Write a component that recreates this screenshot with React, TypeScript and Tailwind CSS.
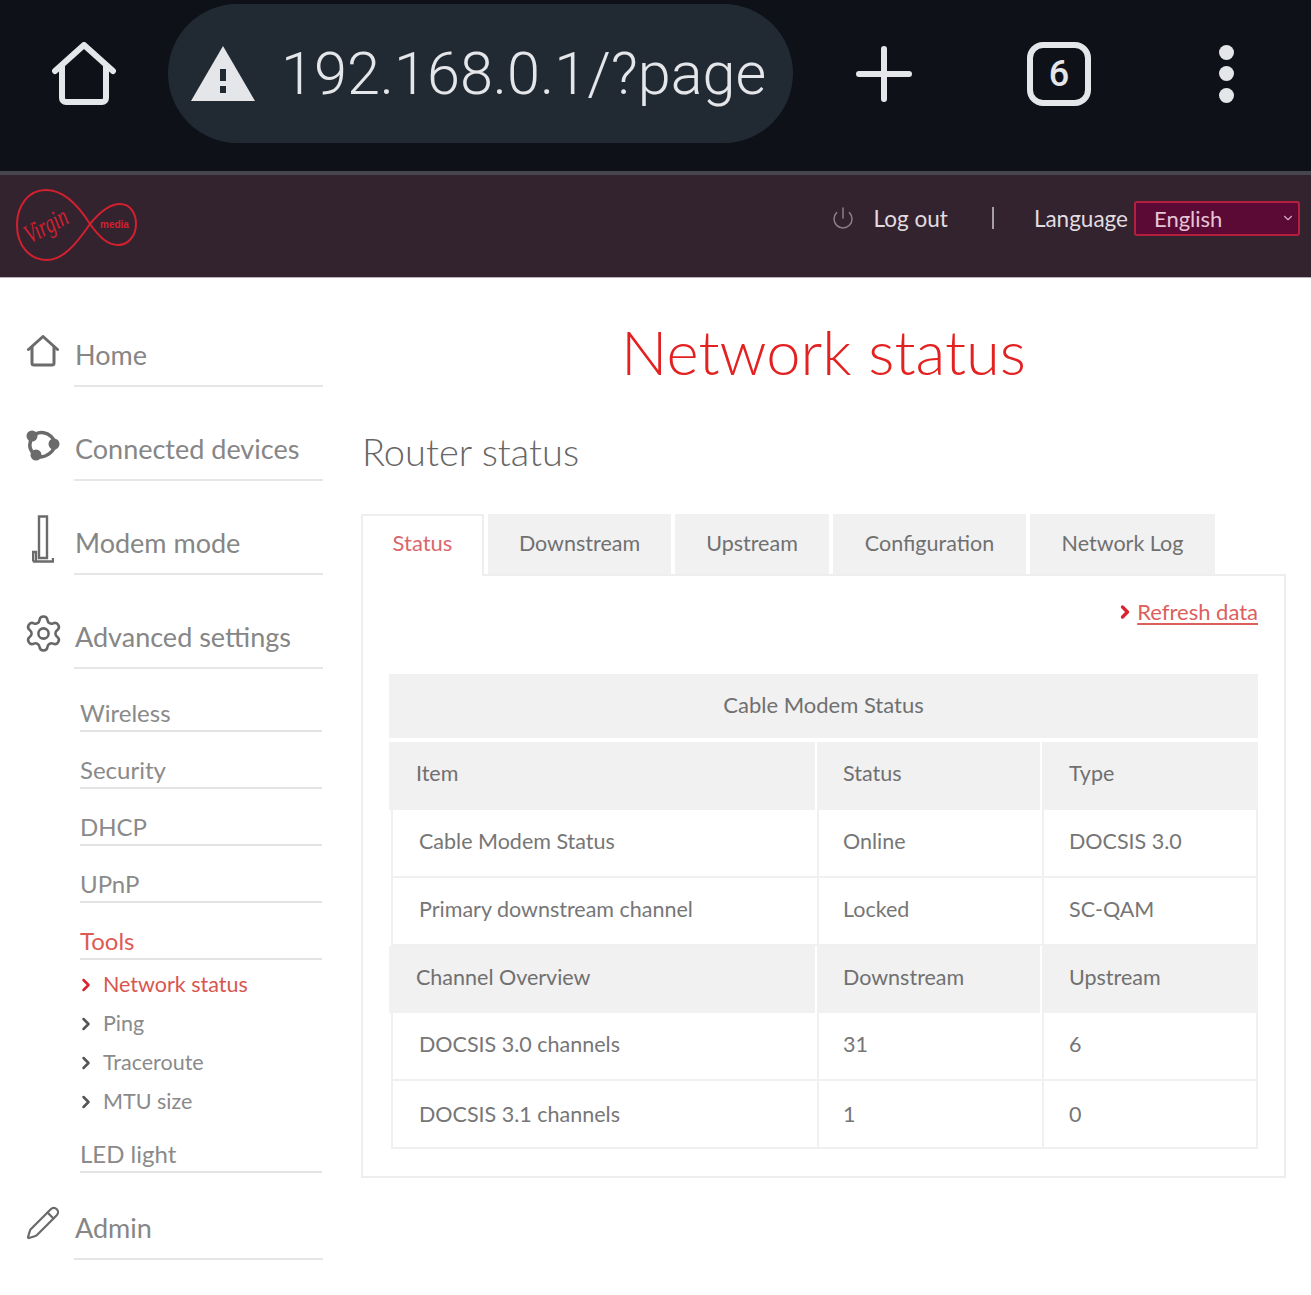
import { ChevronDown, ChevronRight, Pencil, Power, Settings } from 'lucide-react';
import { clsx } from 'clsx';
import type { ReactNode } from 'react';

const font = "font-['Lato','Liberation_Sans',sans-serif]";

function HomeIcon({ className }: { className?: string }) {
  return (
    <svg viewBox="0 0 64 64" className={className} fill="none" stroke="currentColor" strokeWidth="6" strokeLinejoin="round" strokeLinecap="round">
      <path d="M3 29 L32 3 L61 29" />
      <path d="M10 24 V56 a4 4 0 0 0 4 4 H50 a4 4 0 0 0 4 -4 V24" />
    </svg>
  );
}

function DevicesIcon() {
  return (
    <svg viewBox="0 0 34 34" className="h-[34px] w-[34px] text-[#6b6b6b]">
      <path d="M6 10 C 11 2, 24 2, 30 16 C 26 28, 14 32, 8 26 C 3 21, 3 15, 6 10 Z" fill="none" stroke="currentColor" strokeWidth="3.5" />
      <circle cx="6" cy="8" r="5.5" fill="currentColor" />
      <circle cx="28" cy="16" r="5.5" fill="currentColor" />
      <circle cx="10" cy="27" r="5.5" fill="currentColor" />
    </svg>
  );
}

function ModemIcon() {
  return (
    <svg viewBox="0 0 22 48" className="h-[48px] w-[22px] text-[#6b6b6b]" fill="none" stroke="currentColor">
      <path d="M7 1.5 H15 V43 H7 Z" strokeWidth="2.4" />
      <path d="M1 46.5 V37 H4 V46.5 M1 46.5 H21 V43" strokeWidth="2.4" />
    </svg>
  );
}

function NavRow({ icon, label, short }: { icon: ReactNode; label: string; short?: boolean }) {
  return (
    <div className={clsx('flex items-start', short ? 'h-[87px]' : 'h-[94px]')}>
      <div className={clsx('flex h-full w-[75px] shrink-0 items-center justify-center pl-[11px]', short ? 'pt-[13px]' : 'pt-[22px]')}>{icon}</div>
      <div className="-ml-[1px] flex h-full flex-1 items-end border-b-2 border-[#e6e6e6] pb-[10px] pl-[1px] text-[27px] leading-[40px] text-[#868686]">{label}</div>
    </div>
  );
}

function SubRow({ label, active }: { label: string; active?: boolean }) {
  return (
    <div className={clsx('flex h-[57px] items-end border-b-2 border-[#e3e3e3] pb-[1px] text-[24px] leading-[32px]', active ? 'text-[#dd5a55]' : 'text-[#8a8a8a]')}>
      {label}
    </div>
  );
}

function ToolRow({ label, active }: { label: string; active?: boolean }) {
  return (
    <div className={clsx('-ml-[4px] flex h-[39px] items-center gap-[7px] text-[21.5px]', active ? 'text-[#d8564f]' : 'text-[#8a8a8a]')}>
      <ChevronRight size={20} strokeWidth={3} className={active ? 'text-[#d9232e]' : 'text-[#555555]'} />
      {label}
    </div>
  );
}

function Sidebar() {
  return (
    <aside className="w-[323px] shrink-0 pt-[16px]">
      <NavRow icon={<HomeIcon className="h-[32px] w-[32px] text-[#6b6b6b]" />} label="Home" />
      <NavRow icon={<DevicesIcon />} label="Connected devices" />
      <NavRow icon={<ModemIcon />} label="Modem mode" />
      <NavRow icon={<Settings size={41} strokeWidth={1.5} className="text-[#666666]" />} label="Advanced settings" />
      <div className="pl-[80px] pr-[1px] pt-[6px]">
        <SubRow label="Wireless" />
        <SubRow label="Security" />
        <SubRow label="DHCP" />
        <SubRow label="UPnP" />
        <SubRow label="Tools" active />
        <div className="pt-[5px]">
          <ToolRow label="Network status" active />
          <ToolRow label="Ping" />
          <ToolRow label="Traceroute" />
          <ToolRow label="MTU size" />
        </div>
        <div className="flex h-[52px] items-end border-b-2 border-[#e3e3e3] pb-[1px] text-[24px] leading-[32px] text-[#8a8a8a]">LED light</div>
      </div>
      <NavRow short icon={<Pencil size={36} strokeWidth={1.5} className="text-[#6b6b6b]" />} label="Admin" />
    </aside>
  );
}

const tabs = [
  { label: 'Downstream', width: 'w-[183px]' },
  { label: 'Upstream', width: 'w-[154px]' },
  { label: 'Configuration', width: 'w-[193px]' },
  { label: 'Network Log', width: 'w-[185px]' },
];

function Cell({ children, head, className }: { children: ReactNode; head?: boolean; className?: string }) {
  return (
    <div className={clsx('flex items-center text-[21.5px]', head ? 'bg-[#f1f1f1] text-[#707070]' : 'border-[#f0f0f0] text-[#767676]', className)}>
      {children}
    </div>
  );
}

function HeadRow({ cells, height }: { cells: string[]; height: string }) {
  return (
    <div className={clsx('grid grid-cols-[426px_223px_216px] gap-x-[2px]', height)}>
      <Cell head className="pb-[5px] pl-[27px]">{cells[0]}</Cell>
      <Cell head className="pb-[5px] pl-[26px]">{cells[1]}</Cell>
      <Cell head className="pb-[5px] pl-[27px]">{cells[2]}</Cell>
    </div>
  );
}

function DataRow({ cells, last }: { cells: string[]; last?: boolean }) {
  return (
    <div className="grid h-[68px] grid-cols-[426px_225px_216px] pl-[2px]">
      <Cell className={clsx('border-b-2 border-l-2 pl-[26px]', !last && 'pb-[3px]')}>{cells[0]}</Cell>
      <Cell className={clsx('border-b-2 border-l-2 pl-[24px]', !last && 'pb-[3px]')}>{cells[1]}</Cell>
      <Cell className={clsx('border-b-2 border-l-2 border-r-2 pl-[25px]', !last && 'pb-[3px]')}>{cells[2]}</Cell>
    </div>
  );
}

function StatusTable() {
  return (
    <div className="flex flex-col">
      <div className="flex h-[64px] items-center justify-center bg-[#f1f1f1] pb-[4px] text-[22px] text-[#707070]">Cable Modem Status</div>
      <div className="mt-[4px]">
        <HeadRow cells={['Item', 'Status', 'Type']} height="h-[68px]" />
      </div>
      <DataRow cells={['Cable Modem Status', 'Online', 'DOCSIS 3.0']} />
      <DataRow cells={['Primary downstream channel', 'Locked', 'SC-QAM']} />
      <HeadRow cells={['Channel Overview', 'Downstream', 'Upstream']} height="h-[67px]" />
      <DataRow cells={['DOCSIS 3.0 channels', '31', '6']} />
      <DataRow cells={['DOCSIS 3.1 channels', '1', '0']} last />
    </div>
  );
}

function Main() {
  return (
    <main className="ml-[38px] w-[925px] shrink-0">
      <h1 className="pt-[38px] text-center text-[61.5px] font-light leading-[72px] text-[#e32121]">Network status</h1>
      <h2 className="ml-[1px] mt-[41px] text-[38px] font-light leading-[46px] text-[#666666]">Router status</h2>
      <div className="mt-[40px] flex gap-[4px]">
        <div className="z-10 -mb-[2px] flex h-[62px] w-[123px] items-center justify-center border-2 border-b-0 border-[#eeeeee] bg-white pb-[7px] text-[22px] text-[#d9686c]">Status</div>
        {tabs.map((tab) => (
          <div key={tab.label} className={clsx('flex h-[60px] items-center justify-center bg-[#f1f1f1] pb-[2px] text-[21.5px] text-[#707070]', tab.width)}>
            {tab.label}
          </div>
        ))}
      </div>
      <div className="h-[604px] border-2 border-[#eeeeee] pl-[26px] pr-[26px]">
        <div className="flex h-[98px] items-start justify-end gap-[2px] pt-[20px] text-[22px] leading-[32px] text-[#dc5f5c]">
          <ChevronRight size={20} strokeWidth={4} className="mt-[6px] text-[#d9232e]" />
          <span className="underline underline-offset-[3px]">Refresh data</span>
        </div>
        <StatusTable />
      </div>
    </main>
  );
}

function BrowserBar() {
  return (
    <div className="flex h-[171px] items-start bg-[#0e1218] text-[#e4e6ea]">
      <div className="flex h-[147px] w-[168px] items-center justify-center pr-[1px]">
        <HomeIcon className="h-[64px] w-[64px]" />
      </div>
      <div className="mt-[4px] flex h-[139px] w-[625px] items-center rounded-[70px] bg-[#212a33] pl-[23px]">
        <svg viewBox="0 0 64 56" className="h-[56px] w-[64px]">
          <path d="M32 0 L64 55 H0 Z" fill="currentColor" />
          <rect x="29" y="23" width="6" height="12" fill="#212a33" />
          <rect x="29" y="40" width="6" height="7" fill="#212a33" />
        </svg>
        <span className="ml-[26px] mt-[3px] font-['Roboto',sans-serif] text-[59.4px] font-light leading-none">192.168.0.1/?page</span>
      </div>
      <div className="flex h-[147px] flex-1 items-center pl-[63px]">
        <svg viewBox="0 0 56 56" className="h-[56px] w-[56px]" stroke="currentColor" strokeWidth="6" strokeLinecap="round">
          <path d="M28 3 V53 M3 28 H53" />
        </svg>
        <div className="ml-[115px] flex h-[64px] w-[64px] items-center justify-center rounded-[16px] border-[6px] border-current font-['Roboto',sans-serif] text-[36px] font-medium leading-none">6</div>
        <div className="ml-[128px] flex h-[58px] flex-col justify-between">
          <span className="h-[15px] w-[15px] rounded-full bg-current" />
          <span className="h-[15px] w-[15px] rounded-full bg-current" />
          <span className="h-[15px] w-[15px] rounded-full bg-current" />
        </div>
      </div>
    </div>
  );
}

function VirginLogo() {
  return (
    <svg viewBox="0 0 124 74" className="h-[74px] w-[124px] text-[#d3202f]" fill="none">
      <path
        d="M75 36 C 60 12, 46 2, 31 2 C 13 2, 2 18, 2 37 C 2 58, 15 72, 32 72 C 47 72, 60 58, 75 36 C 88 20, 97 16, 105 16 C 115 16, 121 25, 121 36 C 121 48, 113 57, 103 57 C 93 57, 85 50, 75 36 Z"
        stroke="currentColor"
        strokeWidth="2"
      />
      <text x="9" y="47" transform="rotate(-28 30 40)" fill="currentColor" textLength="46" lengthAdjust="spacingAndGlyphs" className="font-['Liberation_Serif',serif] text-[27px] italic">Virgin</text>
      <text x="85" y="40" fill="currentColor" className="font-['Liberation_Sans',sans-serif] text-[10px] font-bold">media</text>
    </svg>
  );
}

function SiteHeader() {
  return (
    <header className="flex h-[106px] items-center border-t-4 border-[#47464e] bg-[#33232f] pl-[15px] pr-[11px] shadow-[0_1px_0_#b9b0b8]">
      <div className="-mt-[2px]">
        <VirginLogo />
      </div>
      <div className="mb-[16px] ml-auto flex items-center text-[22.5px] text-[#e0dce0]">
        <Power size={24} strokeWidth={1.5} className="text-[#8a7f88]" />
        <span className="ml-[19px] mt-[2px]">Log out</span>
        <span className="ml-[44px] h-[22px] w-[2px] bg-[#a69da5]" />
        <span className="ml-[40px] mt-[2px]">Language</span>
        <div className="ml-[6px] flex h-[35px] w-[166px] items-center justify-between rounded-[3px] border-2 border-[#b3203f] bg-[#5a0a35] pl-[18px] pr-[3px] text-[22px] text-[#e6c5d6]">
          English
          <ChevronDown size={14} className="text-[#d8a9c0]" />
        </div>
      </div>
    </header>
  );
}

export default function App() {
  return (
    <div className={clsx('h-[1295px] w-[1311px] overflow-hidden bg-white', font)}>
      <BrowserBar />
      <SiteHeader />
      <div className="flex">
        <Sidebar />
        <Main />
      </div>
    </div>
  );
}
